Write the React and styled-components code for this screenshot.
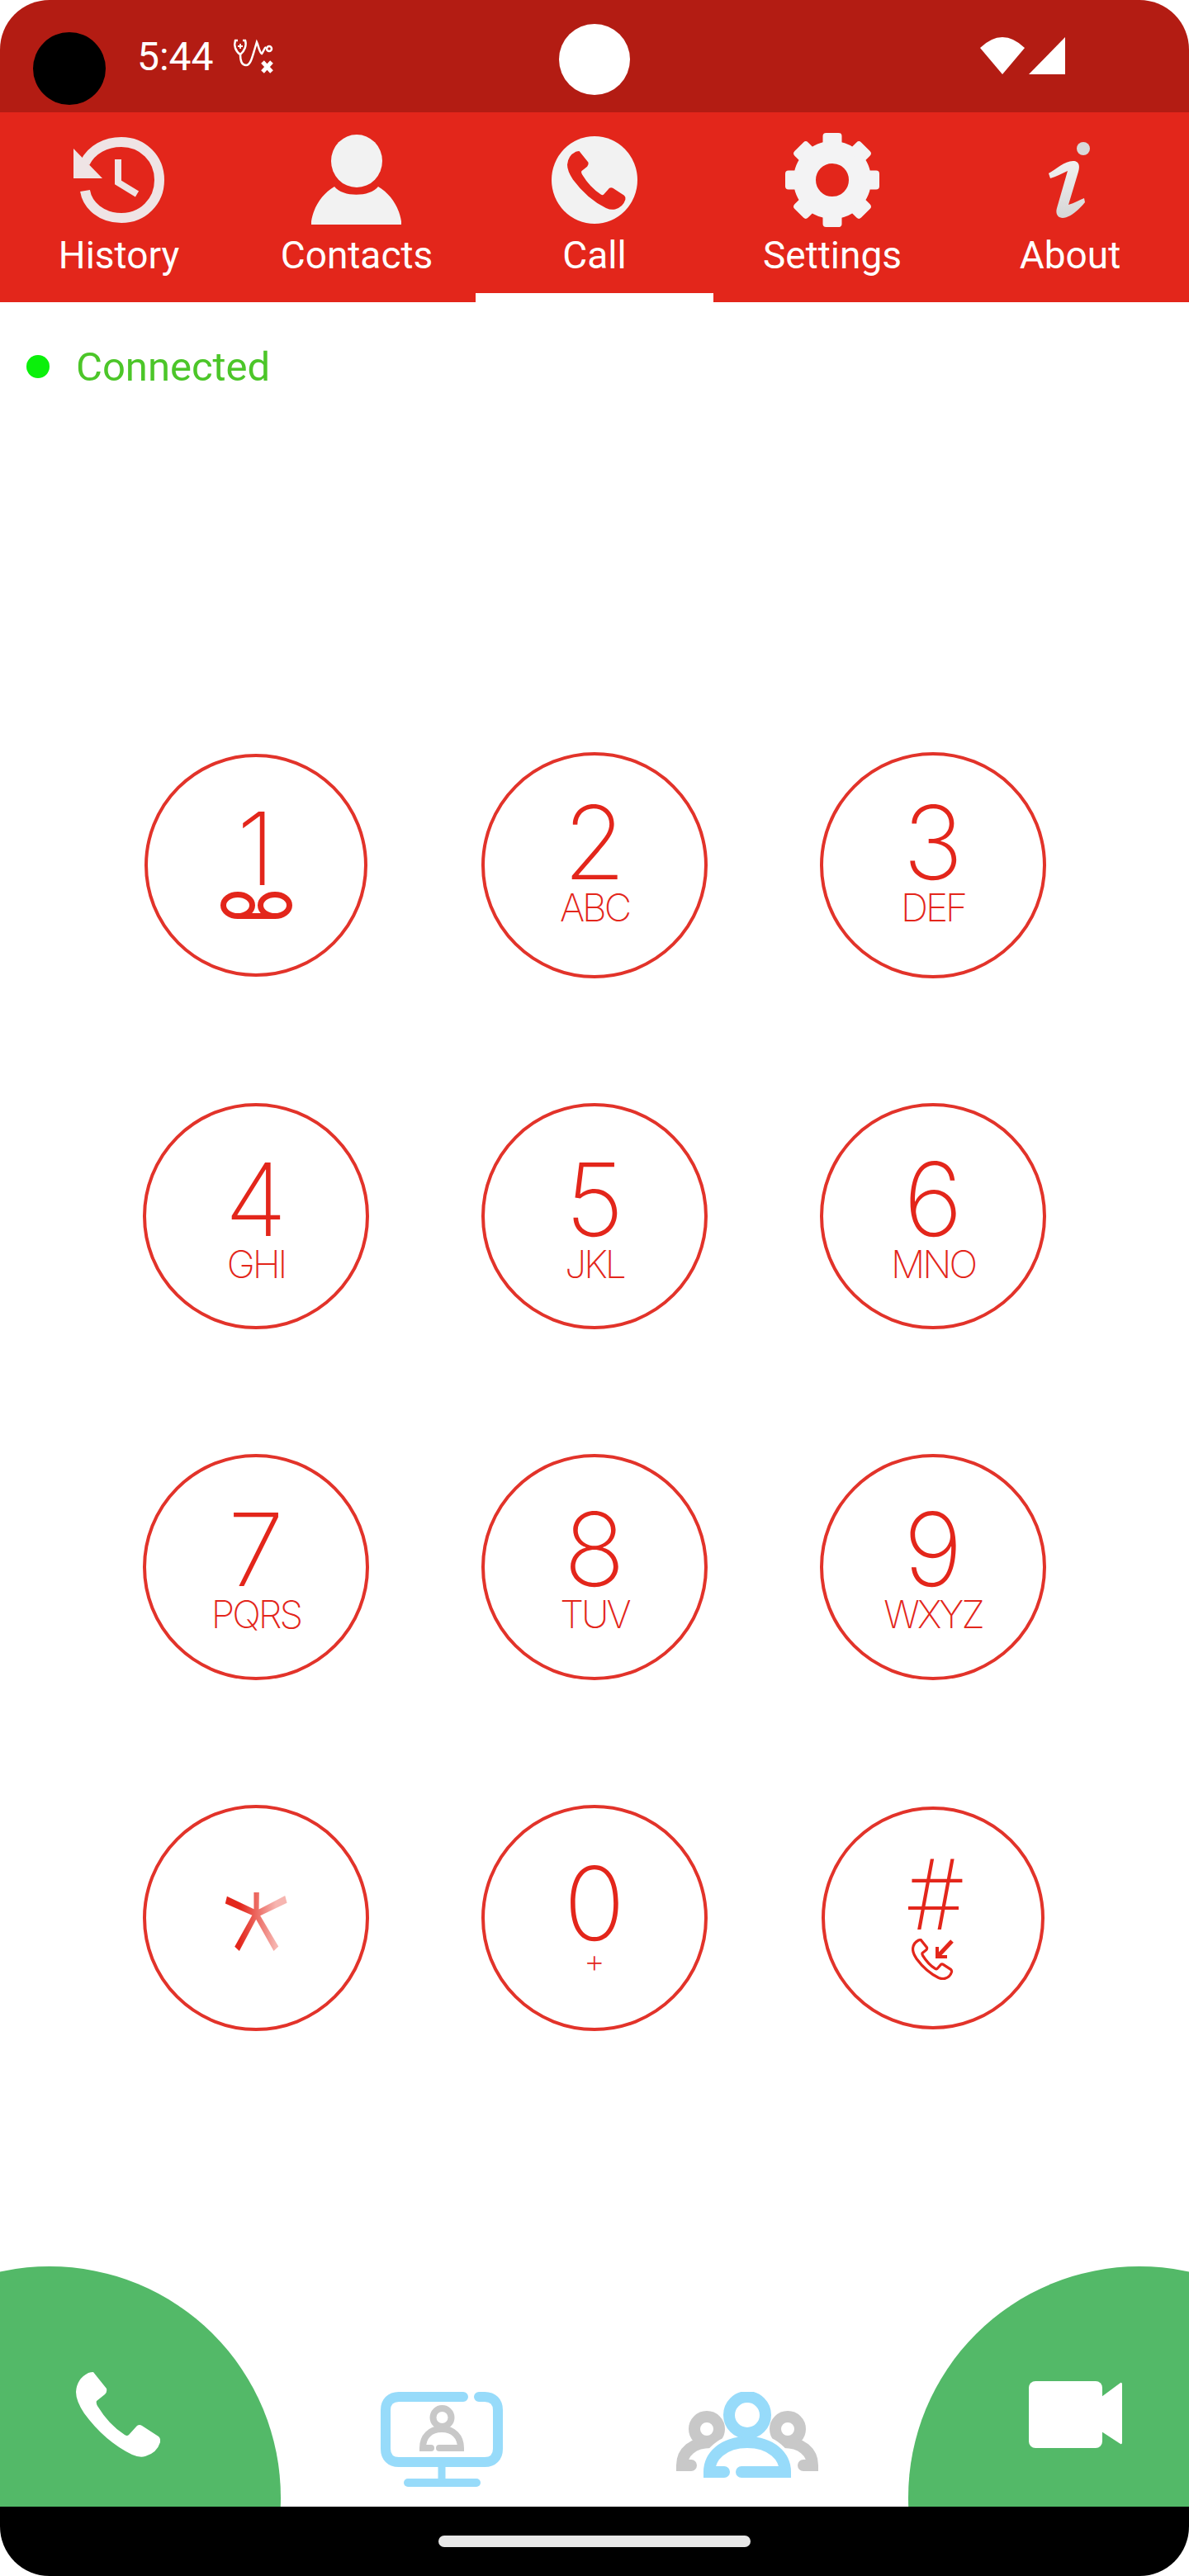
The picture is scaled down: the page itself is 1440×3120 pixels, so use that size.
import React from "react";
import styled, { createGlobalStyle } from "styled-components";

const RED = "#e3261b";
const LINE = "#e2332a";
const BLUE = "#97dbfa";
const GREY = "#c8c8c8";
const PHONE = "M21 0L37 20Q38 24 35 27L25 35Q24 37 26 41Q40 64 59 76Q62 78 64 76L74 65Q77 63 80 65L100 78Q103 81 102 85Q98 98 84 102Q77 104 68 100Q35 84 10 50Q0 35 0 24Q1 8 15 1Q18 0 21 0Z";

const GlobalStyle = createGlobalStyle`
  html, body {
    margin: 0;
    background: #fff;
  }
  body {
    font-family: Roboto, "Liberation Sans", sans-serif;
  }
`;

const Screen = styled.div`
  width: 1440px;
  height: 3120px;
  display: flex;
  flex-direction: column;
  overflow: hidden;
`;

const StatusBar = styled.div`
  height: 136px;
  flex: none;
  display: grid;
  grid-template-columns: 1fr 86px 1fr;
  background: #b31c13;
  border-radius: 60px 60px 0 0;
  color: #fff;
`;

const StatusLeft = styled.div`
  display: flex;
  align-items: flex-start;
`;

const Camera = styled.div`
  width: 88px;
  height: 88px;
  margin: 39px 0 0 40px;
  border-radius: 50%;
  background: #000;
`;

const Clock = styled.span`
  margin: 41px 0 0 38px;
  font-size: 48px;
  line-height: 56px;
`;

const NotifyIcon = styled.svg`
  width: 50px;
  height: 42px;
  margin: 47px 0 0 23px;
`;

const PunchDot = styled.div`
  width: 86px;
  height: 86px;
  margin-top: 29px;
  border-radius: 50%;
  background: #fff;
`;

const StatusRight = styled.div`
  display: flex;
  justify-content: flex-end;
  align-items: flex-start;
  padding-right: 150px;
`;

const SignalIcons = styled.svg`
  width: 103px;
  height: 46px;
  margin-top: 45px;
`;

const NavBar = styled.nav`
  height: 230px;
  flex: none;
  display: grid;
  grid-template-columns: repeat(5, 288px);
  background: ${RED};
`;

const Tab = styled.div`
  box-sizing: border-box;
  display: flex;
  flex-direction: column;
  align-items: center;
  padding-top: 25px;
  border-bottom: 11px solid ${(p) => (p.$active ? "#fff" : "transparent")};
  color: #fff;
`;

const TabIcon = styled.div`
  height: 114px;
  display: flex;
  align-items: center;
  justify-content: center;
`;

const TabLabel = styled.span`
  margin-top: 8px;
  font-size: 46px;
  line-height: 52px;
`;

const Main = styled.main`
  flex: 1;
  display: flex;
  flex-direction: column;
`;

const Connection = styled.div`
  display: flex;
  align-items: center;
  gap: 32px;
  margin: 50px 0 0 32px;
  height: 56px;
  color: #4cc629;
  font-size: 49px;
`;

const ConnectionDot = styled.span`
  width: 28px;
  height: 28px;
  border-radius: 50%;
  background: #0bf00b;
`;

const Keypad = styled.div`
  display: grid;
  grid-template-columns: repeat(3, 410px);
  grid-auto-rows: 274px;
  row-gap: 151px;
  justify-content: center;
  place-items: center;
  margin-top: 439px;
`;

const Key = styled.div`
  box-sizing: border-box;
  width: ${(p) => p.$size || 274}px;
  height: ${(p) => p.$size || 274}px;
  display: flex;
  flex-direction: column;
  align-items: center;
  justify-content: center;
  padding-bottom: ${(p) => p.$lift || 0}px;
  border: 4px solid ${LINE};
  border-radius: 50%;
  color: ${RED};
`;

const Digit = styled.span`
  font-family: Inter, Roboto, sans-serif;
  font-size: 123px;
  font-weight: 170;
  line-height: 104px;
  height: 104px;
  margin-top: 6px;
`;

const Hash = styled(Digit)`
  font-family: Roboto, sans-serif;
  font-size: 120px;
`;

const Letters = styled.span`
  margin-top: 6px;
  font-family: Inter, Roboto, sans-serif;
  font-size: 46px;
  font-weight: 200;
  line-height: 40px;
  letter-spacing: -3px;
`;

const Plus = styled(Letters)`
  margin-top: 2px;
  font-size: 40px;
  line-height: 30px;
  letter-spacing: 0;
`;

const Star = styled.span`
  font-family: Roboto, sans-serif;
  font-size: 190px;
  font-weight: 200;
  line-height: 100px;
  height: 100px;
  margin-top: 68px;
  transform: scaleY(1.3);
  background: linear-gradient(90deg, ${RED} 25%, #f6b5b0 80%);
  -webkit-background-clip: text;
  background-clip: text;
  color: transparent;
`;

const Footer = styled.div`
  height: 291px;
  flex: none;
  display: flex;
  justify-content: space-between;
  overflow: hidden;
`;

const ActionButton = styled.div`
  width: 560px;
  height: 560px;
  flex: none;
  margin: 0 ${(p) => (p.$right ? "-220px" : "0")} 0 ${(p) => (p.$right ? "0" : "-220px")};
  display: flex;
  align-items: flex-start;
  justify-content: ${(p) => (p.$right ? "flex-start" : "flex-end")};
  padding: ${(p) => p.$top}px ${(p) => (p.$right ? "0" : "146px")} 0 ${(p) => (p.$right ? "146px" : "0")};
  box-sizing: border-box;
  border-radius: 50%;
  background: #53b968;
`;

const CallModes = styled.div`
  flex: 1;
  display: flex;
  align-items: flex-start;
  padding-top: 152px;
`;

const ModeIcon = styled.svg`
  margin-left: ${(p) => p.$left}px;
  flex: none;
`;

const BottomBar = styled.div`
  height: 84px;
  flex: none;
  display: flex;
  justify-content: center;
  background: #000;
  border-radius: 0 0 60px 60px;
`;

const HomePill = styled.div`
  width: 378px;
  height: 14px;
  margin-top: 35px;
  border-radius: 7px;
  background: #e8e8e8;
`;

const HistoryIcon = () => (
  <svg width="110" height="104" viewBox="88 166 110 104">
    <path d="M102 197C110 181 127 172 146 172C172 172 192 192 192 218C192 244 172 264 146 264C122 264 105 249 102 231" fill="none" stroke="#efe4e5" strokeWidth="12" />
    <path d="M88 180L123 216H88Z" fill="#efe4e5" />
    <path d="M142 193V221L165 235" fill="none" stroke="#efe4e5" strokeWidth="8" />
  </svg>
);

const ContactIcon = () => (
  <svg width="110" height="110" viewBox="377 163 110 110" fill="#f2f2f2">
    <ellipse cx="432" cy="195" rx="31" ry="32" />
    <path d="M377 268C380 250 390 235 405 226C415 239 448 239 458 226C473 235 483 250 486 268V272H377Z" />
  </svg>
);

const CallIcon = () => (
  <svg width="104" height="106" viewBox="0 0 104 106">
    <ellipse cx="52" cy="53" rx="52" ry="53" fill="#f2f2f2" />
    <g transform="translate(19 18) scale(0.69)">
      <path d={PHONE} fill={RED} />
    </g>
  </svg>
);

const GearIcon = () => (
  <svg width="114" height="114" viewBox="-57 -57 114 114">
    <circle r="33.5" fill="none" stroke="#f3f3f4" strokeWidth="27" />
    {[0, 45, 90, 135, 180, 225, 270, 315].map((angle) => (
      <rect key={angle} x="-11.5" y="-57" width="23" height="18" rx="4" fill="#f3f3f4" transform={`rotate(${angle})`} />
    ))}
  </svg>
);

const AboutIcon = () => (
  <svg width="52" height="94" viewBox="1271 171 52 94">
    <defs>
      <linearGradient id="about-fill" x1="0" y1="0" x2="0" y2="1">
        <stop offset="0" stopColor="#f1f1f1" />
        <stop offset="1" stopColor="#d6d6d6" />
      </linearGradient>
    </defs>
    <circle cx="1313" cy="180" r="8" fill="#d9d9d9" />
    <path d="M1271 210C1280 205 1291 194 1302 195C1308 196 1309 201 1307 208L1295 248C1302 246 1309 242 1314 240L1315 245C1307 255 1296 264 1288 264C1282 264 1279 259 1281 252L1294 207C1287 210 1280 214 1273 216Z" fill="url(#about-fill)" />
  </svg>
);

const VoicemailIcon = () => (
  <svg width="87" height="33" viewBox="0 0 87 33" fill="none" stroke={RED} strokeWidth="7">
    <ellipse cx="21" cy="16.5" rx="17.5" ry="13" />
    <ellipse cx="66" cy="16.5" rx="17.5" ry="13" />
    <path d="M21 29.5H66" />
  </svg>
);

const IncomingIcon = () => (
  <svg width="52" height="50" viewBox="0 0 52 50" fill="none" stroke={RED}>
    <g transform="translate(1.5 1.5) scale(0.46)">
      <path d={PHONE} strokeWidth="7" />
    </g>
    <path d="M49 3L33 20" strokeWidth="5" />
    <path d="M31 10V22H43" strokeWidth="4" />
  </svg>
);

const keys = [
  { digit: "1", sub: <VoicemailIcon />, size: 270, lift: 14 },
  { digit: "2", letters: "ABC", lift: 14 },
  { digit: "3", letters: "DEF", lift: 14 },
  { digit: "4", letters: "GHI" },
  { digit: "5", letters: "JKL" },
  { digit: "6", letters: "MNO" },
  { digit: "7", letters: "PQRS", lift: 2 },
  { digit: "8", letters: "TUV", lift: 2 },
  { digit: "9", letters: "WXYZ", lift: 2 },
  { star: true },
  { digit: "0", plus: true, lift: 8 },
  { hash: true, sub: <IncomingIcon />, size: 270, lift: 10 },
];

export default function App() {
  return (
    <Screen>
      <GlobalStyle />
      <StatusBar>
        <StatusLeft>
          <Camera />
          <Clock>5:44</Clock>
          <NotifyIcon viewBox="0 0 50 42" fill="none" stroke="#fff" strokeWidth="2.5">
            <path d="M6 2H3C1 8 3 15 9 19C14 15 17 8 15 2H12" />
            <path d="M9 6V12M6 9H12" strokeWidth="1.8" />
            <path d="M9 19C9 26 11 32 16 32C21 32 23 24 26 14L29 4C31 8 32 16 35 18C37 16 38 11 40 10" />
            <circle cx="44" cy="12" r="3" />
            <path d="M36 28L47 40M47 28L36 40" strokeWidth="5" />
          </NotifyIcon>
        </StatusLeft>
        <PunchDot />
        <StatusRight>
          <SignalIcons viewBox="1187 45 103 46" fill="#fff">
            <path d="M1214 90L1187 58Q1214 32 1241 58Z" />
            <path d="M1246 90L1290 45V90Z" />
          </SignalIcons>
        </StatusRight>
      </StatusBar>

      <NavBar>
        <Tab><TabIcon><HistoryIcon /></TabIcon><TabLabel>History</TabLabel></Tab>
        <Tab><TabIcon><ContactIcon /></TabIcon><TabLabel>Contacts</TabLabel></Tab>
        <Tab $active><TabIcon><CallIcon /></TabIcon><TabLabel>Call</TabLabel></Tab>
        <Tab><TabIcon><GearIcon /></TabIcon><TabLabel>Settings</TabLabel></Tab>
        <Tab><TabIcon><AboutIcon /></TabIcon><TabLabel>About</TabLabel></Tab>
      </NavBar>

      <Main>
        <Connection>
          <ConnectionDot />
          Connected
        </Connection>
        <Keypad>
          {keys.map((key, i) => (
            <Key key={i} $size={key.size} $lift={key.lift}>
              {key.star && <Star>*</Star>}
              {key.hash && <Hash>#</Hash>}
              {key.digit && <Digit>{key.digit}</Digit>}
              {key.letters && <Letters>{key.letters}</Letters>}
              {key.plus && <Plus>+</Plus>}
              {key.sub}
            </Key>
          ))}
        </Keypad>
      </Main>

      <Footer>
        <ActionButton $top={128}>
          <svg width="102" height="103" viewBox="0 0 102 103">
            <path d={PHONE} fill="#fff" />
          </svg>
        </ActionButton>
        <CallModes>
          <ModeIcon $left={121} width="148" height="116" viewBox="460 2898 148 116" fill="none" strokeLinecap="round">
            <path d="M560 2904H482C472 2904 466 2910 466 2920V2967C466 2977 472 2983 482 2983H586C596 2983 602 2977 602 2967V2920C602 2910 596 2904 586 2904H579" stroke={BLUE} strokeWidth="12" />
            <path d="M534 2989V3006" stroke={BLUE} strokeWidth="9" strokeLinecap="butt" />
            <path d="M493 3008H576" stroke={BLUE} strokeWidth="10" />
            <circle cx="534.5" cy="2929" r="11" stroke={GREY} strokeWidth="8" />
            <path d="M521 2966H511C511 2952 520 2943 534 2943C548 2943 557 2952 557 2966H531" stroke={GREY} strokeWidth="8" />
          </ModeIcon>
          <ModeIcon $left={210} width="174" height="106" viewBox="818 2897 174 106" fill="none" strokeLinecap="round">
            <circle cx="855" cy="2942" r="15" stroke={GREY} strokeWidth="14" />
            <path d="M860 2958C838 2958 825 2970 825 2986H836" stroke={GREY} strokeWidth="14" />
            <circle cx="953" cy="2942" r="15" stroke={GREY} strokeWidth="14" />
            <path d="M948 2958C970 2958 983 2970 983 2986H972" stroke={GREY} strokeWidth="14" />
            <path d="M876 2994H858C858 2975 875 2958 904 2958C933 2958 950 2975 950 2994H897" stroke="#fff" strokeWidth="22" />
            <circle cx="904" cy="2925" r="22" stroke={BLUE} strokeWidth="14" />
            <path d="M876 2994H858C858 2975 875 2958 904 2958C933 2958 950 2975 950 2994H897" stroke={BLUE} strokeWidth="14" />
          </ModeIcon>
        </CallModes>
        <ActionButton $right $top={139}>
          <svg width="113" height="81" viewBox="1247 2884 113 81" fill="#fff">
            <rect x="1247" y="2884" width="89" height="81" rx="8" />
            <path d="M1335 2903L1358 2886Q1360 2885 1360 2888V2958Q1360 2961 1358 2960L1335 2945Z" />
          </svg>
        </ActionButton>
      </Footer>

      <BottomBar>
        <HomePill />
      </BottomBar>
    </Screen>
  );
}
